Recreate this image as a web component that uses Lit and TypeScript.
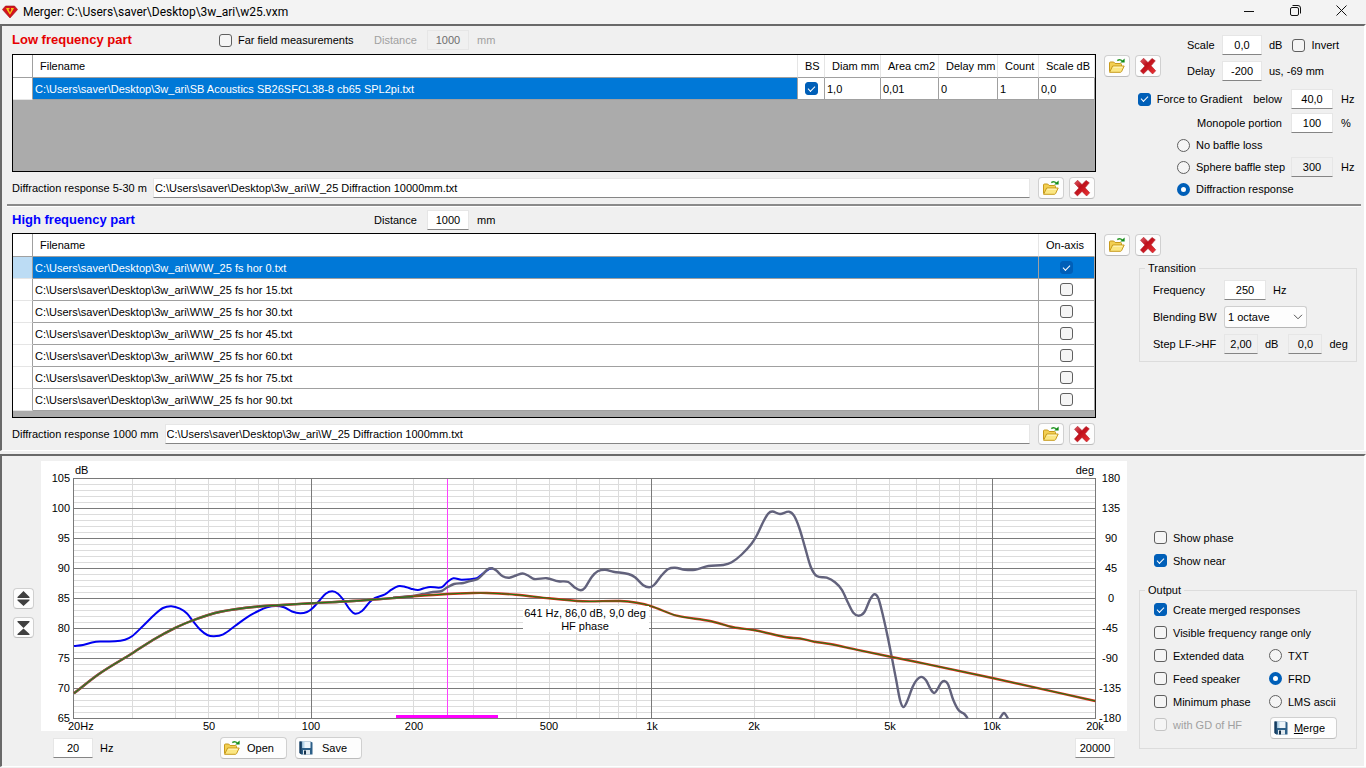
import { LitElement, html, svg, css } from "lit";
import { customElement } from "lit/decorators.js";

type Pt = [number, number];

/* Plot area of the response chart, in view-box units. */
const PLOT = { x: 32.5, y: 17.5, w: 1022, h: 240 };
const fx = (f: number) => 32 + (Math.log10(f / 20) / 3) * PLOT.w;
const snap = (v: number) => Math.floor(v) + 0.5;

const MINOR = [30, 40, 50, 60, 70, 80, 90].flatMap((f) => [f, f * 10, f * 100]).concat([200, 2000]);
const MAJOR = [100, 1000, 10000];
const FREQ_LABELS: [number, string][] = [
  [50, "50"], [100, "100"], [200, "200"], [500, "500"], [1000, "1k"],
  [2000, "2k"], [5000, "5k"], [10000, "10k"], [20000, "20k"],
];
const SPL_LABELS = [105, 100, 95, 90, 85, 80, 75, 70, 65];
const DEG_LABELS = [180, 135, 90, 45, 0, -45, -90, -135, -180];

const LF_RAW: Pt[] = [
  [33, 185], [42, 184], [51, 181.5], [59, 180.5], [74, 180.3], [84, 178.7], [91, 175.3], [102, 165],
  [114, 153.3], [122, 147], [130.3, 145.3], [139, 147.7], [146, 152.5], [151.5, 159.5], [159, 168.5],
  [166.3, 174], [173, 175.3], [182.3, 173.3], [194.3, 164.7], [206, 156.3], [217.3, 150], [226, 146.3],
  [235, 145], [243, 146.3], [251, 150.5], [259, 152.3], [266, 151], [271.5, 147.3], [279, 139],
  [285, 132.5], [291.3, 130.3], [297, 132.7], [302.5, 139], [309, 148.7], [314, 152.7], [321, 150],
  [329, 140.7], [334, 137], [344, 133.3], [350.5, 128.7], [357, 125.2], [363, 125.5], [370, 127.7],
  [377, 129], [383, 127.3], [389, 126], [400.7, 126.3], [406.3, 121], [412.3, 117.3], [420.7, 118.7],
  [435.7, 117.3], [441, 113.3], [448, 108], [452, 107.3],
];
const MERGED: Pt[] = [
  [352, 136.7], [372, 135], [382, 133], [392, 131], [400.7, 130], [406.3, 126.3], [413, 123],
  [422.3, 122], [429, 120], [436.3, 118.3], [441.7, 113.5], [446.3, 108.5], [450.7, 107.3],
  [455, 109.3], [461.7, 115.3], [468.3, 116.7], [475, 114.5], [481.7, 112.5], [487, 114.5], [493, 118],
  [505.7, 117.2], [517.3, 120.3], [527.3, 121], [534, 126.7], [539.7, 129.3], [544, 126.7], [550.7, 116],
  [556.7, 110.3], [564, 108.7], [572.3, 110.7], [587.3, 113], [594, 116.3], [602.3, 124.3], [608.3, 126.3],
  [613, 124], [620.7, 114.3], [627.3, 108], [634, 106.7], [644, 108.7], [654, 108.7], [667.3, 105],
  [682.3, 104], [690.7, 101.3], [700.7, 93.5], [710.7, 82.5], [716, 74], [722.3, 60.7], [727.3, 52.5],
  [731.3, 50.5], [739, 53], [748, 50.7], [753, 54.7], [758.3, 67], [764, 86.3], [769.7, 105.7],
  [775.7, 115], [785.7, 116.7], [794, 121.3], [800.7, 128.7], [807.3, 142.3], [812.3, 151.7],
  [817.7, 154.7], [823.3, 151.3], [829, 138.7], [833.3, 133.3], [837.3, 137.3], [842.3, 156],
  [847, 177.3], [851, 197.3], [855, 218], [859, 239], [862.3, 246], [865.7, 241.3], [871.7, 225.7],
  [875.7, 219], [880.3, 215.9], [885, 219.3], [889.7, 228.3], [893.3, 232], [897, 227.3], [900, 222],
  [903.3, 220], [907, 223.3], [912.3, 239], [917.7, 249.3], [923.3, 253], [926.7, 257.3],
];
const MERGED_TAIL: Pt[] = [[958.7, 257.5], [963, 252], [967, 257.5]];
const NEAR: Pt[] = [
  [33, 232.3], [59, 212.3], [91.3, 192.3], [112.3, 178.7], [134.3, 166.8], [151.5, 159.5], [167.3, 154],
  [180.7, 150.5], [194.3, 148.2], [217.3, 145.5], [237, 144.2], [270.7, 142.2], [312, 140], [359, 136.5],
  [372.3, 135.3], [406.3, 133], [432.3, 132], [445.7, 132], [475, 133.7], [508, 137.3], [536, 140],
  [549, 140.4], [579, 140], [595.7, 141.7], [610.7, 145.3], [635.7, 154.7], [669, 160], [692.3, 166.3],
  [714, 169.3], [745.7, 176.3], [759, 177.5], [773.3, 180.7], [789, 183], [815.3, 188.7], [850.7, 196],
  [875.7, 201], [951.3, 217], [1054.3, 240],
];

/* Cubic Hermite curve through the sampled points, tangents from the neighbours' slope. */
function spline(p: Pt[]): string {
  const slope = p.map((_, i) => {
    const a = p[Math.max(0, i - 1)], b = p[Math.min(p.length - 1, i + 1)];
    return (b[1] - a[1]) / (b[0] - a[0]);
  });
  let d = `M${p[0][0]} ${p[0][1]}`;
  for (let i = 1; i < p.length; i++) {
    const a = p[i - 1], b = p[i], h = (b[0] - a[0]) / 3;
    d += `C${(a[0] + h).toFixed(2)} ${(a[1] + slope[i - 1] * h).toFixed(2)} ${(b[0] - h).toFixed(2)} ${(b[1] - slope[i] * h).toFixed(2)} ${b[0]} ${b[1]}`;
  }
  return d;
}

const folderIcon = html`<svg class="ico" viewBox="0 0 18 16" width="18" height="16" aria-hidden="true">
  <path d="M1.500 13.500V5q0-1 1-1h3.200l1.400 1.500h5.400q1 0 1 1V9" fill="#f3cf52" stroke="#c79a1c"/>
  <path d="M1.600 14.300 4.600 8h11.600l-2.600 5.500q-.4.8-1.200.8z" fill="#fbe682" stroke="#c79a1c" stroke-linejoin="round"/>
  <path d="M5.300 9.200h9.200" stroke="#fff6c4"/>
  <path d="M9.300 2.600q2.600-2 5 .4" fill="none" stroke="#2c9a2c" stroke-width="1.500"/>
  <path d="M12.200 4.600h4.400V.6z" fill="#128a18"/>
</svg>`;
const crossIcon = html`<svg class="ico" viewBox="0 0 18 18" width="18" height="18" aria-hidden="true">
  <defs><linearGradient id="r" x1="0" y1="0" x2="1" y2="1"><stop offset="0" stop-color="#e0606a"/><stop offset=".4" stop-color="#bd0f1a"/><stop offset="1" stop-color="#ee3434"/></linearGradient></defs>
  <path d="M4.600 1.200 9 5.600l4-4.200 3.300 2.400-4.200 5 4.600 5-3.100 3.200L9 12.400l-4.600 4.500-3-3L5.900 9 1.500 4.300z" fill="url(#r)" stroke="#b3202a" stroke-width=".6"/>
</svg>`;
const floppyIcon = html`<svg class="ico" viewBox="0 0 16 16" width="16" height="16" aria-hidden="true">
  <path d="M1.500 1.500h11l2 1v12h-11l-2-1.500z" fill="#2c5f88"/>
  <path d="M1.500 1.500h2v13l-2-1.500z" fill="#173c5e"/>
  <path d="M4.500 1.500h8V8h-8z" fill="#eef5fa"/><path d="M4.500 1.500h2V8h-2z" fill="#b8d6ea"/>
  <path d="M5 10h7v4.500H5z" fill="#dfe8ee"/><path d="M6 10.500h2v4H6z" fill="#16324c"/>
</svg>`;

@customElement("app-root")
export class AppRoot extends LitElement {
  static styles = css`
    :host { display: flex; flex-direction: column; min-height: 100vh; background: #f0f0f0; color: #000;
      font: 11px/14px "Liberation Sans", Arial, sans-serif; box-sizing: border-box; padding-bottom: 1px; }
    * { box-sizing: border-box; }
    input, select, button { font: inherit; color: inherit; margin: 0; }
    svg { display: block; flex: none; }

    .titlebar { display: flex; align-items: center; height: 24px; background: #f3f3f3; padding: 0 2px; }
    .titlebar h1 { margin: 0 auto 0 5px; font: 12px/16px Roboto, sans-serif; }
    .winbtn { width: 46px; height: 24px; padding: 0 0 4px; border: 0; background: none; display: grid; place-items: center; }

    .panel { border: 2px solid #696969; border-color: #696969 #fff #fff #696969; border-bottom-width: 1px; }
    .panel.lower { margin-top: 3px; flex: 1; display: grid; grid-template-columns: 39px minmax(0, 1fr) 237px; }
    .section { display: grid; grid-template-columns: minmax(0, 1fr) 260px; column-gap: 8px; padding-left: 10px; }
    .rule { height: 3px; margin: 0 3px 0 5px; border: 0; border-top: 2px solid #8a8a8a; border-bottom: 1px solid #fff; }

    .head { display: grid; grid-template-columns: 207px 155px 53px 41px auto; align-items: center; height: 28px; }
    .head.hf { height: 26px; }
    .head h2 { margin: 0; font: bold 13px/16px "Liberation Sans", Arial, sans-serif; white-space: nowrap; }
    .red { color: #e60000; }
    .blue { color: #0000ff; }
    .unit-in { padding-left: 9px; }
    .muted { color: #a0a0a0; }

    .txt { height: 20px; width: 40px; padding: 0; text-align: center; background: #fff; border: 1px solid #e6e6e6;
      border-bottom-color: #858585; border-radius: 0; outline: 0; }
    .txt:disabled, .txt[readonly] { background: #f0f0f0; }
    .txt.off { color: #6d6d6d; border-bottom-color: #e6e6e6; }
    .txt.path { flex: 1; min-width: 0; text-align: left; padding-left: 1px; background: #fff; }
    .w34 { width: 34px; } .w42 { width: 42px; }

    .opt { display: inline-flex; align-items: center; gap: 6px; white-space: nowrap; }
    .chk, .rad { appearance: none; flex: none; width: 13px; height: 13px; border: 1px solid #5f5f5f; background: #f5f5f5; display: grid; place-content: center; }
    .chk { border-radius: 3px; }
    .chk:checked { background: #005fb8; border-color: #005fb8; }
    .chk:checked::before { content: ""; width: 6px; height: 3px; border-left: 1px solid #fff; border-bottom: 1px solid #fff; transform: rotate(-45deg); margin-bottom: 2px; }
    .chk:disabled { border-color: #c4c4c4; }
    .rad { border-radius: 50%; }
    .rad:checked { border: 4px solid #005fb8; background: #fff; }

    .grid { border: 1px solid #000; background: #ababab; padding-bottom: 6px; }
    .grid.tall { padding-bottom: 71px; }
    table { width: 100%; table-layout: fixed; border-collapse: separate; border-spacing: 0; background: #fff; }
    th, td { height: 22px; padding: 0 0 0 2px; text-align: left; font-weight: normal; white-space: nowrap; overflow: hidden;
      border-right: 1px solid #a0a0a0; border-bottom: 1px solid #a0a0a0; }
    thead th { height: 23px; border-right-color: #e5e5e5; padding-left: 7px; }
    thead th:first-child, tbody th { border-right-color: #a0a0a0; }
    tbody th { border-bottom-color: #e5e5e5; }
    td.mid { padding: 0; } td.mid .chk { margin: 0 auto; }
    td.sel { background: #0078d7; color: #fff; }
    th.cur { background: #bcdcf4; }
    .c-h { width: 20px; } .c-bs { width: 27px; } .c-56 { width: 56px; } .c-58 { width: 58px; } .c-59 { width: 59px; } .c-41 { width: 41px; }

    .diff { display: flex; align-items: center; height: 32px; padding-right: 1px; }
    .diff label { margin-right: 6px; white-space: nowrap; }
    .diff .btns { margin-left: 8px; }
    .btns { display: flex; gap: 5px; }
    .btn { display: flex; align-items: center; justify-content: center; height: 22px; padding: 0; background: #fdfdfd; border: 1px solid #d0d0d0; border-bottom-color: #bcbcbc; border-radius: 4px; }
    .sq { width: 26px; }
    .wide { width: 67px; justify-content: flex-start; padding-left: 2px; }
    .wide span { flex: 1; text-align: center; padding-right: 6px; }

    .lfside { display: flex; flex-direction: column; }
    .top { display: flex; padding-top: 9px; margin-bottom: 7px; }
    .top .btns { padding-top: 20px; margin-right: 26px; height: 42px; }
    .lines { display: grid; grid-template-columns: 35px 40px auto; row-gap: 6px; align-items: center; }
    .lines .after { display: flex; gap: 10px; padding-left: 7px; white-space: nowrap; }
    .line { display: flex; align-items: center; height: 22px; justify-content: flex-end; }
    .line.first { margin-bottom: 2px; }
    .line .txt { margin-left: 9px; }
    .line .unit { width: 23px; margin-left: 8px; }
    .line.pick { justify-content: flex-start; padding-left: 73px; }
    .line.pick .txt { margin-left: auto; }
    .below { margin-left: 11px; }

    fieldset { margin: 0; border: 1px solid #dcdcdc; padding: 0; min-width: 0; }
    legend { margin-left: 5px; padding: 0 3px; line-height: 14px; }
    .trans { margin: 5px 7px 0 35px; }
    .rows { padding: 1px 0 4px 13px; }
    .row { display: flex; align-items: center; height: 27px; white-space: nowrap; }
    .row > label:first-child { width: 71px; flex: none; }
    .u { margin-left: 7px; }
    .u + .txt { margin-left: 10px; }
    .hfside > .btns { padding-top: 27px; }
    select { appearance: none; width: 83px; height: 22px; padding: 0 18px 0 3px; border: 1px solid #cfcfcf; border-bottom-color: #b5b5b5; border-radius: 3px; outline: 0;
      background: #fdfdfd url("data:image/svg+xml,%3Csvg xmlns='http://www.w3.org/2000/svg' width='10' height='6'%3E%3Cpath d='M1 .8 5 4.8 9 .8' fill='none' stroke='%23555'/%3E%3C/svg%3E") no-repeat right 3px center; }

    .spin { display: flex; flex-direction: column; gap: 8px; padding: 132px 0 0 11px; }
    .spin .btn { width: 21px; height: 21px; }
    .plotcol { padding-top: 5px; min-width: 0; }
    .chart { width: 100%; height: auto; background: #fff; }
    .foot { display: flex; align-items: center; height: 34px; padding: 0 12px; }
    .foot .hz { width: 120px; margin-left: 7px; }
    .foot .btn { margin-right: 8px; }
    .foot .end { margin-left: auto; }
    .outside { padding: 70px 7px 0 12px; }
    .show { display: grid; grid-auto-rows: 23px; align-items: center; padding-left: 15px; margin-bottom: 11px; }
    .outgrid { display: grid; grid-template-columns: 115px auto; grid-auto-rows: 23px; align-items: center; padding: 1px 0 12px 14px; }
    .span { display: grid; grid-column: 1 / -1; }
    .merge { align-self: start; margin-top: 4px; margin-left: 1px; }
  `;

  private chart() {
    const bottom = PLOT.y + PLOT.h, right = PLOT.x + PLOT.w;
    const rows = Array.from({ length: 41 }, (_, i) => i);
    return html`<svg class="chart" viewBox="0 0 1086 270" font-size="11" font-family="Liberation Sans, Arial, sans-serif" role="img" aria-label="Merged frequency response">
      <defs><clipPath id="plot"><rect x="32" y="17" width="1023" height="241"/></clipPath></defs>
      <g stroke="#dcdcdc">
        ${rows.filter((i) => i % 5).map((i) => svg`<path d="M${PLOT.x} ${PLOT.y + i * 6}H${right}"/>`)}
        ${MINOR.map((f) => svg`<path d="M${snap(fx(f))} ${PLOT.y}V${bottom}"/>`)}
      </g>
      <g stroke="#7a7a7a">
        ${rows.filter((i) => i % 5 === 0).map((i) => svg`<path d="M${PLOT.x} ${PLOT.y + i * 6}H${right}"/>`)}
        ${MAJOR.map((f) => svg`<path d="M${snap(fx(f))} ${PLOT.y}V${bottom}"/>`)}
        <rect x=${PLOT.x} y=${PLOT.y} width=${PLOT.w} height=${PLOT.h} fill="none"/>
      </g>
      <rect x="406" y="18" width="1" height="237" fill="#ff40ff"/>
      <rect x="355" y="254" width="102" height="3" fill="#ff00ff"/>
      <g fill="none" stroke-linejoin="round" clip-path="url(#plot)">
        <path d=${spline(LF_RAW)} stroke="#0000f0" stroke-width="2"/>
        <path d=${spline(MERGED)} stroke="#62627c" stroke-width="2.400"/>
        <path d=${spline(MERGED_TAIL)} stroke="#62627c" stroke-width="2.400"/>
        <path d=${spline(NEAR)} stroke="#d8301c" stroke-width="2.400"/>
        <path d=${spline(NEAR.slice(0, 15))} stroke="#7d5a50" stroke-width="2.400"/>
        <path d=${spline(NEAR)} stroke="#1c7a10" stroke-width="1"/>
      </g>
      <rect x="482" y="145" width="126" height="26" fill="#fff"/>
      <text x="544" y="156" text-anchor="middle">641 Hz, 86,0 dB, 9,0 deg</text>
      <text x="544" y="169" text-anchor="middle">HF phase</text>
      <text x="34" y="13">dB</text>
      <text x="1053" y="13" text-anchor="end">deg</text>
      ${SPL_LABELS.map((v, i) => svg`<text x="29" y=${21 + i * 30} text-anchor="end">${v}</text>`)}
      ${DEG_LABELS.map((v, i) => svg`<text x=${v < 0 ? 1069 : 1070} y=${21 + i * 30} text-anchor="middle">${v}</text>`)}
      <text x="27" y="269">20Hz</text>
      ${FREQ_LABELS.map(([f, t]) => svg`<text x=${Math.round(fx(f))} y="269" text-anchor="middle">${t}</text>`)}
    </svg>`;
  }

  private fileButtons(what: string) {
    return html`<div class="btns">
      <button class="btn sq" aria-label="Open ${what}">${folderIcon}</button>
      <button class="btn sq" aria-label="Remove ${what}">${crossIcon}</button>
    </div>`;
  }

  private check(label: string, on = false, off = false) {
    return html`<label class="opt ${off ? "muted" : ""}"><input class="chk" type="checkbox" ?checked=${on} ?disabled=${off}>${label}</label>`;
  }

  private radio(name: string, label: string, on = false) {
    return html`<label class="opt"><input class="rad" type="radio" name=${name} ?checked=${on}>${label}</label>`;
  }

  render() {
    const base = "C:\\Users\\saver\\Desktop\\3w_ari\\";
    return html`
      <header class="titlebar">
        <svg viewBox="0 0 16 14" width="16" height="14" aria-hidden="true">
          <path d="M3.500 1h9L15.600 4.500 8 13 .4 4.500z" fill="#d3121c" stroke="#9c0f14" stroke-width=".6"/>
          <path d="M4 3h3.500v2L9 4.600V3h3L10 6.500 8 9.800 5.500 6z" fill="#f5c518"/>
          <path d="M6.500 4.200h3L8 7.500z" fill="#c31018"/>
        </svg>
        <h1>Merger: ${base}w25.vxm</h1>
        <button class="winbtn" aria-label="Minimize"><svg width="11" height="11"><path d="M0 6.500h10" stroke="#111"/></svg></button>
        <button class="winbtn" aria-label="Restore"><svg width="11" height="11" fill="none" stroke="#111"><rect x=".5" y="2.500" width="8" height="8" rx="1.500"/><path d="M2.500.5H8q2.500 0 2.500 2.500v5.500"/></svg></button>
        <button class="winbtn" aria-label="Close"><svg width="11" height="11"><path d="M.5.5l10 10M10.500.5l-10 10" stroke="#111"/></svg></button>
      </header>

      <main class="panel">
        <section class="section">
          <div>
            <div class="head">
              <h2 class="red">Low frequency part</h2>
              ${this.check("Far field measurements")}
              <label class="muted" for="lfd">Distance</label>
              <input class="txt off w42" id="lfd" value="1000" disabled>
              <span class="unit-in muted">mm</span>
            </div>
            <div class="grid tall">
              <table>
                <colgroup><col class="c-h"><col><col class="c-bs"><col class="c-56"><col class="c-58"><col class="c-59"><col class="c-41"><col class="c-56"></colgroup>
                <thead><tr><th></th>${["Filename", "BS", "Diam mm", "Area cm2", "Delay mm", "Count", "Scale dB"].map((h) => html`<th scope="col">${h}</th>`)}</tr></thead>
                <tbody><tr><th></th><td class="sel">${base}SB Acoustics SB26SFCL38-8 cb65 SPL2pi.txt</td>
                  <td class="mid"><input class="chk" type="checkbox" checked aria-label="Baffle step"></td>
                  <td>1,0</td><td>0,01</td><td>0</td><td>1</td><td>0,0</td></tr></tbody>
              </table>
            </div>
            <div class="diff">
              <label for="d1">Diffraction response 5-30 m</label>
              <input class="txt path" id="d1" value="${base}W_25 Diffraction 10000mm.txt">
              ${this.fileButtons("far diffraction response")}
            </div>
          </div>
          <div class="lfside">
            <div class="top">
              ${this.fileButtons("low frequency file")}
              <div class="lines">
                <label for="sc">Scale</label><input class="txt" id="sc" value="0,0">
                <span class="after"><span>dB</span>${this.check("Invert")}</span>
                <label for="dl">Delay</label><input class="txt" id="dl" value="-200">
                <span class="after">us, -69 mm</span>
              </div>
            </div>
            <div class="line first">${this.check("Force to Gradient", true)}
              <label class="below" for="bl">below</label><input class="txt w42" id="bl" value="40,0"><span class="unit">Hz</span></div>
            <div class="line"><label for="mp">Monopole portion</label><input class="txt w42" id="mp" value="100"><span class="unit">%</span></div>
            <div class="line pick">${this.radio("baffle", "No baffle loss")}</div>
            <div class="line pick">${this.radio("baffle", "Sphere baffle step")}
              <input class="txt w42" value="300" readonly aria-label="Sphere baffle step frequency"><span class="unit">Hz</span></div>
            <div class="line pick">${this.radio("baffle", "Diffraction response", true)}</div>
          </div>
        </section>

        <hr class="rule">

        <section class="section">
          <div>
            <div class="head hf">
              <h2 class="blue">High frequency part</h2><span></span>
              <label for="hfd">Distance</label>
              <input class="txt w42" id="hfd" value="1000">
              <span class="unit-in">mm</span>
            </div>
            <div class="grid">
              <table>
                <colgroup><col class="c-h"><col><col class="c-56"></colgroup>
                <thead><tr><th></th><th scope="col">Filename</th><th scope="col">On-axis</th></tr></thead>
                <tbody>${[0, 15, 30, 45, 60, 75, 90].map((a) => html`<tr>
                  <th class=${a ? "" : "cur"}></th>
                  <td class=${a ? "" : "sel"}>${base}W\\W_25 fs hor ${a}.txt</td>
                  <td class="mid ${a ? "" : "sel"}"><input class="chk" type="checkbox" ?checked=${!a} aria-label="On-axis ${a}"></td>
                </tr>`)}</tbody>
              </table>
            </div>
            <div class="diff">
              <label for="d2">Diffraction response 1000 mm</label>
              <input class="txt path" id="d2" value="${base}W_25 Diffraction 1000mm.txt">
              ${this.fileButtons("near diffraction response")}
            </div>
          </div>
          <div class="hfside">
            ${this.fileButtons("high frequency file")}
            <fieldset class="trans">
              <legend>Transition</legend>
              <div class="rows">
                <div class="row"><label for="tf">Frequency</label><input class="txt w42" id="tf" value="250"><span class="u">Hz</span></div>
                <div class="row"><label for="bw">Blending BW</label><select id="bw"><option>1 octave</option></select></div>
                <div class="row"><label for="st">Step LF-&gt;HF</label><input class="txt w34" id="st" value="2,00" readonly><span class="u">dB</span>
                  <input class="txt w34" value="0,0" readonly aria-label="Step phase"><span class="u">deg</span></div>
              </div>
            </fieldset>
          </div>
        </section>
      </main>

      <section class="panel lower">
        <div class="spin">
          <button class="btn" aria-label="Expand scale"><svg width="13" height="15" fill="#404040"><path d="M6.500 0 12.500 6v1H.5V6zM6.500 15 12.500 9.500V8.500H.5v1z"/></svg></button>
          <button class="btn" aria-label="Compress scale"><svg width="13" height="14" fill="#404040"><path d="M6.500 7 .5 1V0h12v1zM6.500 7.500 .5 13v1h12v-1z"/></svg></button>
        </div>
        <div class="plotcol">
          ${this.chart()}
          <div class="foot">
            <input class="txt" id="fmin" value="20"><label class="hz" for="fmin">Hz</label>
            <button class="btn wide">${folderIcon}<span>Open</span></button>
            <button class="btn wide">${floppyIcon}<span>Save</span></button>
            <input class="txt end" value="20000" aria-label="Maximum frequency">
          </div>
        </div>
        <div class="outside">
          <div class="show">${this.check("Show phase")}${this.check("Show near", true)}</div>
          <fieldset>
            <legend>Output</legend>
            <div class="outgrid">
              <span class="span">${this.check("Create merged responses", true)}</span>
              <span class="span">${this.check("Visible frequency range only")}</span>
              ${this.check("Extended data")}${this.radio("fmt", "TXT")}
              ${this.check("Feed speaker")}${this.radio("fmt", "FRD", true)}
              ${this.check("Minimum phase")}${this.radio("fmt", "LMS ascii")}
              ${this.check("with GD of HF", false, true)}
              <button class="btn wide merge">${floppyIcon}<span><u>M</u>erge</span></button>
            </div>
          </fieldset>
        </div>
      </section>
    `;
  }
}
